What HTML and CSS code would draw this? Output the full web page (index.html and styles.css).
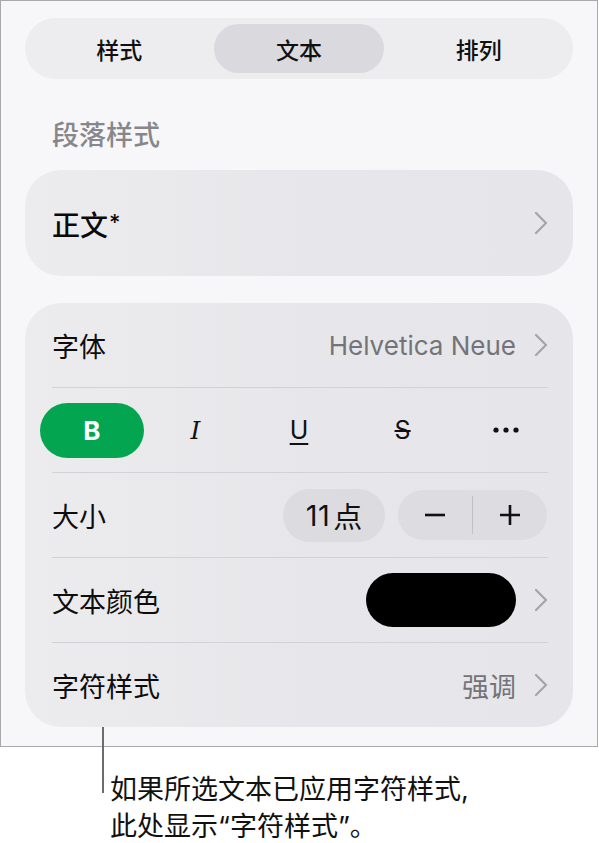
FILE: index.html
```html
<!DOCTYPE html>
<html lang="zh-CN">
<head>
<meta charset="utf-8">
<title>文本</title>
<link rel="stylesheet" href="styles.css">
</head>
<body>
<div class="frame">
  <div class="segmented">
    <div class="seg">样式</div>
    <div class="seg active">文本</div>
    <div class="seg">排列</div>
  </div>

  <div class="section-title">段落样式</div>

  <div class="card para">
    <div class="para-name">正文<span class="ast">*</span></div>
    <svg class="chev" viewBox="0 0 14 24" width="14" height="24"><path d="M2 2 L12 12 L2 22" /></svg>
  </div>

  <div class="card list">
    <div class="row">
      <div class="label">字体</div>
      <div class="value">Helvetica Neue</div>
      <svg class="chev" viewBox="0 0 14 24" width="14" height="24"><path d="M2 2 L12 12 L2 22" /></svg>
    </div>
    <div class="divider"></div>
    <div class="row fmt">
      <div class="fbtn bold on">B</div>
      <div class="fbtn italic">I</div>
      <div class="fbtn under">U</div>
      <div class="fbtn strike">S</div>
      <div class="fbtn more">
        <svg viewBox="0 0 26 6" width="26" height="6"><circle cx="3" cy="3" r="2.6"/><circle cx="13" cy="3" r="2.6"/><circle cx="23" cy="3" r="2.6"/></svg>
      </div>
    </div>
    <div class="divider"></div>
    <div class="row">
      <div class="label">大小</div>
      <div class="size-pill"><span class="num">11</span><span class="unit">点</span></div>
      <div class="stepper">
        <div class="step">
          <svg viewBox="0 0 22 22" width="22" height="22"><path d="M1 11 H21" /></svg>
        </div>
        <div class="step-sep"></div>
        <div class="step">
          <svg viewBox="0 0 22 22" width="22" height="22"><path d="M1 11 H21 M11 1 V21" /></svg>
        </div>
      </div>
    </div>
    <div class="divider"></div>
    <div class="row">
      <div class="label">文本颜色</div>
      <div class="swatch"></div>
      <svg class="chev" viewBox="0 0 14 24" width="14" height="24"><path d="M2 2 L12 12 L2 22" /></svg>
    </div>
    <div class="divider"></div>
    <div class="row">
      <div class="label">字符样式</div>
      <div class="value cjk">强调</div>
      <svg class="chev" viewBox="0 0 14 24" width="14" height="24"><path d="M2 2 L12 12 L2 22" /></svg>
    </div>
  </div>
</div>

<div class="callout">
  <p class="callout-text">如果所选文本已应用字符样式,<br>此处显示“字符样式”。</p>
</div>
</body>
</html>
```

FILE: styles.css
```css
* { box-sizing: border-box; }

html, body {
  margin: 0;
  padding: 0;
  background: #ffffff;
}

body {
  width: 599px;
  height: 843px;
  overflow: hidden;
  font-family: Inter, "Noto Sans CJK SC", sans-serif;
  color: #000;
}

.frame {
  width: 598px;
  height: 747px;
  border: 1px solid #a9a9ab;
  background: #f7f7f9;
  padding: 17px 24px 0 24px;
}

/* segmented control */
.segmented {
  height: 61px;
  border-radius: 31px;
  background: #ededf0;
  display: grid;
  grid-template-columns: repeat(3, 1fr);
  column-gap: 9px;
  padding: 6px 9px;
}

.seg {
  display: flex;
  align-items: center;
  justify-content: center;
  border-radius: 25px;
  font-size: 23px;
  font-weight: 500;
  color: #111;
}

.seg.active {
  background: #dadade;
}

.section-title {
  margin: 30px 0 0 27px;
  height: 53px;
  line-height: 53px;
  font-size: 27px;
  font-weight: 500;
  color: #87878b;
}

.card {
  background: linear-gradient(90deg, #ececee 0%, #e7e7eb 50%, #e5e5ea 100%);
  border-radius: 36px;
}

.para {
  margin-top: 8px;
  height: 106px;
  display: flex;
  align-items: center;
  padding: 0 25px 0 27px;
}

.para-name {
  flex: 1;
  font-size: 28px;
  font-weight: 500;
  color: #0a0a0a;
  padding-top: 2px;
}

.ast {
  font-size: 22px;
  vertical-align: 6px;
  margin-left: 1px;
}

.chev {
  width: 14px;
  height: 24px;
  flex: none;
  margin-left: 18px;
}

.chev path {
  fill: none;
  stroke: #a4a4a9;
  stroke-width: 2.2;
  stroke-linecap: round;
  stroke-linejoin: round;
}

.list {
  margin-top: 27px;
  height: 424px;
  display: flex;
  flex-direction: column;
}

.row {
  height: 84px;
  display: flex;
  align-items: center;
  margin: 0 25px 0 27px;
}

.divider {
  height: 1px;
  background: #d2d2d6;
  margin: 0 25px 0 27px;
}

.label {
  flex: 1;
  font-size: 27px;
  color: #0d0d0d;
}

.value {
  font-size: 26px;
  color: #747478;
}

.value.cjk {
  font-size: 27px;
}

/* format buttons */
.row.fmt {
  margin: 0 15px;
  height: 84px;
  display: grid;
  grid-template-columns: repeat(5, 1fr);
  align-items: center;
}

.fbtn {
  height: 55px;
  border-radius: 28px;
  display: flex;
  align-items: center;
  justify-content: center;
  font-size: 26px;
  color: #111;
}

.fbtn.on {
  background: #03a550;
  color: #fff;
}

.bold {
  font-weight: 700;
  font-size: 26px;
}

.italic {
  font-family: "DejaVu Serif", "Liberation Serif", serif;
  font-style: italic;
  font-size: 25px;
}

.under {
  text-decoration: underline;
  text-decoration-thickness: 1.5px;
  text-underline-offset: 4px;
  font-size: 25px;
}

.strike {
  text-decoration: line-through;
  text-decoration-thickness: 1.5px;
  font-size: 25px;
}

.more svg circle {
  fill: #111;
}

/* size */
.size-pill {
  width: 102px;
  height: 53px;
  border-radius: 27px;
  background: #dcdce0;
  display: flex;
  align-items: center;
  justify-content: center;
  color: #111;
  margin-right: 13px;
  gap: 3px;
}

.size-pill .num {
  font-size: 29px;
  letter-spacing: 0.5px;
}

.size-pill .unit {
  font-size: 29px;
}

.stepper {
  width: 149px;
  height: 50px;
  border-radius: 25px;
  background: #dcdce1;
  display: flex;
  align-items: center;
  margin-right: 1px;
}

.step {
  flex: 1;
  display: flex;
  align-items: center;
  justify-content: center;
}

.step svg path {
  stroke: #111;
  stroke-width: 2.6;
  fill: none;
}

.step-sep {
  width: 1px;
  height: 38px;
  background: #c0c0c5;
}

.swatch {
  width: 150px;
  height: 54px;
  border-radius: 27px;
  background: #000;
}

/* callout */
.callout {
  position: relative;
  padding: 24px 0 0 110px;
}

.callout::before {
  content: "";
  position: absolute;
  left: 102px;
  top: -20px;
  width: 1.5px;
  height: 66px;
  background: #6c6c6c;
}

.callout-text {
  margin: 0;
  font-size: 27px;
  line-height: 37px;
  color: #111;
}
```
